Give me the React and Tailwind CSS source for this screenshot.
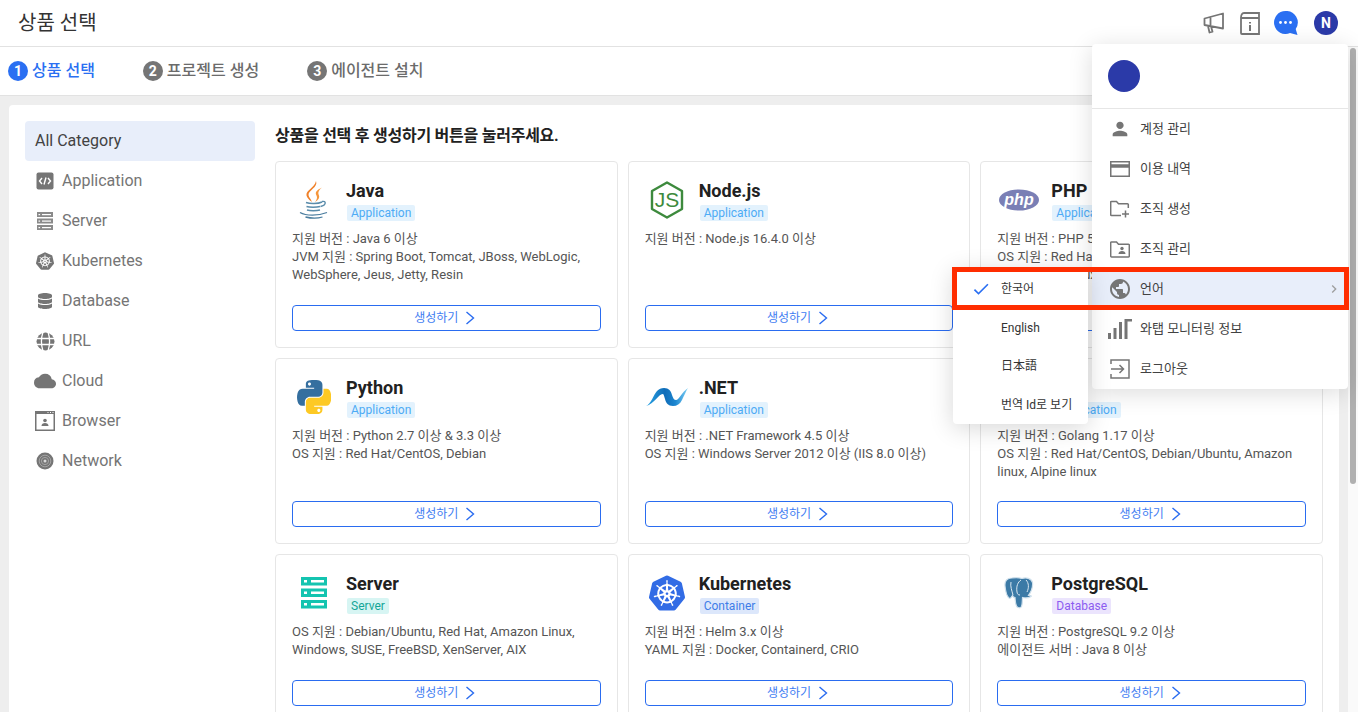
import { MdPerson, MdPublic, MdCheck, MdCloud, MdChevronRight } from 'react-icons/md';
import { SiKubernetes } from 'react-icons/si';
import { FaDatabase } from 'react-icons/fa';

const GRAY = '#757575';

// sidebar icons
function AppIcon() {
  return (
    <svg width="18" height="18" viewBox="0 0 18 18">
      <rect x="0.5" y="0.5" width="17" height="17" rx="2" fill={GRAY} />
      <path d="M6 6 3.5 9 6 12M12 6l2.5 3-2.5 3M10 5.5 8 12.5" fill="none" stroke="#fff" strokeWidth="1.4" />
    </svg>
  );
}

function ServerIcon() {
  return (
    <svg width="18" height="20" viewBox="0 0 18 20">
      {[1, 7.5, 14].map(y => (
        <g key={y}>
          <rect x="1" y={y} width="16" height="5" fill="#8a8a8a" />
          <rect x="2.5" y={y + 2} width="1.6" height="1.2" fill="#fff" />
          <rect x="6" y={y + 2} width="9" height="1.2" fill="#fff" />
        </g>
      ))}
    </svg>
  );
}

function GlobeIcon() {
  return (
    <svg width="19" height="19" viewBox="0 0 19 19">
      <circle cx="9.5" cy="9.5" r="9" fill={GRAY} />
      <path d="M0 6.5h19M0 12.5h19M7 0C5 6 5 13 7 19M12 0c2 6 2 13 0 19" fill="none" stroke="#fff" strokeWidth="1.3" />
    </svg>
  );
}

function BrowserIcon() {
  return (
    <svg width="20" height="20" viewBox="0 0 20 20">
      <rect x="0.75" y="0.75" width="18.5" height="18.5" fill="none" stroke={GRAY} strokeWidth="1.5" />
      <rect x="0" y="0" width="20" height="3" fill={GRAY} />
      <path d="M12.5 1.5h1M15 1.5h1M17.5 1.5h1" stroke="#fff" strokeWidth="1" />
      <circle cx="10" cy="9.5" r="1.8" fill={GRAY} />
      <path d="M6.5 15c0-2 1.5-3 3.5-3s3.5 1 3.5 3z" fill={GRAY} />
    </svg>
  );
}

function NetworkIcon() {
  return (
    <svg width="18" height="18" viewBox="0 0 18 18">
      <circle cx="9" cy="9" r="8.5" fill={GRAY} />
      <circle cx="9" cy="9" r="5.8" fill="none" stroke="#a8a8a8" strokeWidth="0.9" />
      <circle cx="9" cy="9" r="3.6" fill="none" stroke="#a8a8a8" strokeWidth="0.9" />
      <circle cx="9" cy="9" r="1.5" fill="#d8d8d8" />
    </svg>
  );
}

// product logos
function JavaLogo() {
  return (
    <svg width="30" height="38" viewBox="0 0 30 38">
      <path d="M17 0c2.500 6-8 9.500-7.500 14 .3 2.500 2.500 4 3.500 7-.5-.3-4.500-3-5.500-6.500C6.500 9.500 15.500 7 17 0z" fill="#f0812a" />
      <path d="M23 6.500c-5 2.500-7.500 4.500-5.500 8 1 2 .5 4-1.500 6.500 3.500-2 5-4.500 3.800-7-1-2.500-.3-4.500 3.200-7.500z" fill="#f5963c" />
      <path d="M7 21.500c4 1.500 12 1.500 16-.5M7.500 25.500c3 1 10 1 13.500 0M8 29c3 1 9.500 1 13 0M23 20.500c4.500-1 4.500 3.500-1.500 5" fill="none" stroke="#5a8cab" strokeWidth="1.400" />
      <path d="M1 31.500c6 3.500 18 3.500 27 0M6.500 36c6 1.500 12 1.500 17 0" fill="none" stroke="#4a7d9f" strokeWidth="1.300" />
    </svg>
  );
}

function NodeLogo() {
  return (
    <svg width="34" height="38" viewBox="0 0 34 38">
      <path d="M17 1.500 32 10v18L17 36.500 2 28V10z" fill="none" stroke="#3d8a3d" strokeWidth="2.400" strokeLinejoin="round" />
      <text x="17" y="26" textAnchor="middle" fontFamily="Liberation Sans" fontSize="21" fill="#3d8a3d">JS</text>
    </svg>
  );
}

function PhpLogo() {
  return (
    <svg width="40" height="22" viewBox="0 0 40 22">
      <ellipse cx="20" cy="11" rx="20" ry="10.500" fill="#7a7fb5" />
      <text x="20" y="15.500" textAnchor="middle" fontFamily="Liberation Sans" fontStyle="italic" fontWeight="700" fontSize="16" fill="#fff">php</text>
    </svg>
  );
}

function PythonLogo() {
  return (
    <svg width="34" height="34" viewBox="0 0 110 110">
      <path fill="#356f9f" d="M54.919 0C50.335.021 45.958.412 42.106 1.094 30.76 3.098 28.7 7.295 28.7 15.031V25.25h26.813v3.406H18.638c-7.793 0-14.616 4.684-16.75 13.594-2.462 10.213-2.571 16.586 0 27.25 1.906 7.938 6.457 13.594 14.25 13.594h9.219V70.844c0-8.85 7.657-16.656 16.75-16.656h26.781c7.455 0 13.406-6.138 13.406-13.625V15.031c0-7.266-6.13-12.725-13.406-13.937C64.282.328 59.502-.02 54.919 0ZM40.419 8.219c2.77 0 5.031 2.299 5.031 5.125 0 2.816-2.262 5.094-5.031 5.094-2.78 0-5.031-2.278-5.031-5.094 0-2.826 2.251-5.125 5.031-5.125Z" />
      <path fill="#fdc924" d="M85.638 28.656v11.906c0 9.231-7.826 17-16.75 17H42.106c-7.336 0-13.406 6.278-13.406 13.625v25.531c0 7.266 6.319 11.54 13.406 13.625 8.487 2.496 16.626 2.947 26.781 0 6.75-1.954 13.406-5.888 13.406-13.625V86.5H55.513v-3.406h40.188c7.793 0 10.696-5.436 13.406-13.594 2.8-8.399 2.68-16.476 0-27.25-1.926-7.757-5.604-13.594-13.406-13.594ZM70.575 93.313c2.78 0 5.031 2.278 5.031 5.094 0 2.826-2.251 5.125-5.031 5.125-2.77 0-5.031-2.299-5.031-5.125 0-2.816 2.261-5.094 5.031-5.094Z" />
    </svg>
  );
}

function DotnetLogo() {
  return (
    <svg width="42" height="18" viewBox="0 0 42 18">
      <defs>
        <linearGradient id="netg" x1="0" y1="0" x2="1" y2="0">
          <stop offset="0" stopColor="#2aa5e6" />
          <stop offset="0.45" stopColor="#0f6cb8" />
          <stop offset="0.7" stopColor="#1c86d0" />
          <stop offset="1" stopColor="#7fd0f5" />
        </linearGradient>
      </defs>
      <path d="M0 18C5 16 8 6 11 3 13 1 15 0 18 0c5 0 7 3 8 7 1 3 2 5 4 5 3 0 6-8 12-12-2 3-4 8-6 12-2 4-5 6-9 6-5 0-7-3-8-7-1-3-1-5-2.500-5C13 6 8 16 0 18z" fill="url(#netg)" />
    </svg>
  );
}

function ServerLogo() {
  return (
    <svg width="26" height="32" viewBox="0 0 26 32">
      {[0, 11.500, 23].map(y => (
        <g key={y}>
          <rect x="0" y={y} width="26" height="8.500" fill="#14c4b0" />
          <rect x="3" y={y + 3} width="3" height="2.500" fill="#fff" />
          <rect x="10" y={y + 3} width="13" height="2.500" fill="#fff" />
        </g>
      ))}
    </svg>
  );
}

function PostgresLogo() {
  return (
    <svg width="30" height="32" viewBox="0 0 30 32">
      <path d="M8 1C3 1 .5 4 1 9c.4 4 1.500 10 4 12 1.500 1 2.500-1 3.500-2.500.5 1.500 1 2 2.500 2 .2 3 .3 6 1.500 8.500 1 2 4 2.500 5 .5 1-2.500 .8-6 1-9 3 .8 6 .5 8.500-1 1-1-1-1-2.500-1.200C27 15 29 10 28.500 5.500 27.500 1.500 22 0 18 1.500 15 .5 11 .5 8 1z" fill="#3c7aa6" stroke="#cfe0ec" strokeWidth="1.200" />
      <path d="M7 5c-1 4 1 9 2 13M17 3c-3 2-5 6-4 12 .3 2 1 3 3 3 M22 3c3 3 3 8 1 12" fill="none" stroke="#dbe8f1" strokeWidth="1" />
    </svg>
  );
}

function GoLogo() {
  return (
    <svg width="40" height="20" viewBox="0 0 40 20">
      <text x="20" y="16" textAnchor="middle" fontFamily="Liberation Sans" fontStyle="italic" fontWeight="700" fontSize="19" fill="#00acd7">GO</text>
    </svg>
  );
}

const BADGES = {
  Application: 'bg-[#e3f2fd] text-[#4dabf5]',
  Server: 'bg-[#d7f5f3] text-[#14a597]',
  Container: 'bg-[#dce7fb] text-[#3f7de8]',
  Database: 'bg-[#ebe4fd] text-[#8c5cf0]',
};

const PRODUCTS = [
  { name: 'Java', badge: 'Application', logo: <JavaLogo />, lines: ['지원 버전 : Java 6 이상', 'JVM 지원 : Spring Boot, Tomcat, JBoss, WebLogic, WebSphere, Jeus, Jetty, Resin'] },
  { name: 'Node.js', badge: 'Application', logo: <NodeLogo />, lines: ['지원 버전 : Node.js 16.4.0 이상'] },
  { name: 'PHP', badge: 'Application', logo: <PhpLogo />, lines: ['지원 버전 : PHP 5.3 이상', 'OS 지원 : Red Hat/CentOS, Debian/Ubuntu, Amazon linux, Alpine linux'] },
  { name: 'Python', badge: 'Application', logo: <PythonLogo />, lines: ['지원 버전 : Python 2.7 이상 & 3.3 이상', 'OS 지원 : Red Hat/CentOS, Debian'] },
  { name: '.NET', badge: 'Application', logo: <DotnetLogo />, lines: ['지원 버전 : .NET Framework 4.5 이상', 'OS 지원 : Windows Server 2012 이상 (IIS 8.0 이상)'] },
  { name: 'Go', badge: 'Application', logo: <GoLogo />, lines: ['지원 버전 : Golang 1.17 이상', 'OS 지원 : Red Hat/CentOS, Debian/Ubuntu, Amazon linux, Alpine linux'] },
  { name: 'Server', badge: 'Server', logo: <ServerLogo />, lines: ['OS 지원 : Debian/Ubuntu, Red Hat, Amazon Linux, Windows, SUSE, FreeBSD, XenServer, AIX'] },
  { name: 'Kubernetes', badge: 'Container', logo: <SiKubernetes size={36} color="#326ce5" />, lines: ['지원 버전 : Helm 3.x 이상', 'YAML 지원 : Docker, Containerd, CRIO'] },
  { name: 'PostgreSQL', badge: 'Database', logo: <PostgresLogo />, lines: ['지원 버전 : PostgreSQL 9.2 이상', '에이전트 서버 : Java 8 이상'] },
];

const CATEGORIES = [
  { label: 'Application', icon: <AppIcon /> },
  { label: 'Server', icon: <ServerIcon /> },
  { label: 'Kubernetes', icon: <SiKubernetes size={18} color={GRAY} /> },
  { label: 'Database', icon: <FaDatabase size={16} color={GRAY} /> },
  { label: 'URL', icon: <GlobeIcon /> },
  { label: 'Cloud', icon: <MdCloud size={22} color={GRAY} /> },
  { label: 'Browser', icon: <BrowserIcon /> },
  { label: 'Network', icon: <NetworkIcon /> },
];

const STEPS = ['상품 선택', '프로젝트 생성', '에이전트 설치'];

function ProductCard({ item }) {
  return (
    <div className="flex flex-col rounded-[4px] border border-[#e6e6e6] bg-white p-4">
      <div className="mb-2 flex">
        <div className="mr-[10px] flex h-11 w-11 items-center justify-center">{item.logo}</div>
        <div className="flex flex-col items-start">
          <div className="h-[27px] text-[18px] leading-[26px] font-bold text-[#212121]">{item.name}</div>
          <span className={`ml-px h-4 rounded-[2px] px-[4px] text-[12px] leading-4 ${BADGES[item.badge]}`}>{item.badge}</span>
        </div>
      </div>
      <div className="pb-[20.5px] text-[13px] leading-[18px] text-[#555]">
        {item.lines.map(l => <div key={l}>{l}</div>)}
      </div>
      <button className="mt-auto flex h-[26px] shrink-0 items-center justify-center gap-[7px] rounded-[4px] border border-[#2a6cf0] bg-white pr-[2px] text-[12px] text-[#3f7df2]">
        생성하기
        <svg width="11" height="14" viewBox="0 0 11 14"><path d="M1.500 1 8.500 7l-7 6" fill="none" stroke="#2a6cf0" strokeWidth="1.400" /></svg>
      </button>
    </div>
  );
}

function FolderPlus() {
  return (
    <svg width="20" height="18" viewBox="0 0 20 18" fill="none" stroke={GRAY} strokeWidth="1.500">
      <path d="M11 15.500H1.500a.8.8 0 0 1-.8-.8V2.200a.8.8 0 0 1 .8-.8h5l2 2.300h9a.8.8 0 0 1 .8.8v3.500" />
      <path d="M15.500 10.500v7M12 14h7" />
    </svg>
  );
}

function FolderUser() {
  return (
    <svg width="20" height="17" viewBox="0 0 20 17">
      <path d="M1.500 1h5l2 2.300h10a.8.8 0 0 1 .8.8v11a.8.8 0 0 1-.8.8h-17a.8.8 0 0 1-.8-.8V1.800a.8.8 0 0 1 .8-.8z" fill="none" stroke={GRAY} strokeWidth="1.500" />
      <circle cx="12" cy="7.500" r="1.700" fill={GRAY} />
      <path d="M8.500 13c0-2 1.500-3 3.500-3s3.500 1 3.500 3z" fill={GRAY} />
    </svg>
  );
}

const MENU = [
  { label: '계정 관리', icon: <MdPerson size={22} color={GRAY} /> },
  { label: '이용 내역', icon: <svg width="20" height="16" viewBox="0 0 20 16" fill="none" stroke={GRAY} strokeWidth="1.500"><rect x="0.750" y="0.750" width="18.500" height="14.500" /><path d="M0 5h20" strokeWidth="3.500" /></svg> },
  { label: '조직 생성', icon: <FolderPlus /> },
  { label: '조직 관리', icon: <FolderUser /> },
  { label: '언어', icon: <MdPublic size={24} color={GRAY} />, active: true },
  { label: '와탭 모니터링 정보', icon: <svg width="24" height="20" viewBox="0 0 24 20" fill={GRAY}><rect x="0" y="14" width="3" height="6" /><rect x="5.500" y="9" width="3" height="11" /><rect x="11" y="3" width="3" height="17" /><path d="M16.500 20V0H24v2.500h-4.500V20z" /></svg> },
  { label: '로그아웃', icon: <svg width="20" height="20" viewBox="0 0 20 20" fill="none" stroke={GRAY} strokeWidth="1.500"><path d="M1 5V1h18v18H1v-4" /><path d="M1 10h12M9.500 6l4 4-4 4" /></svg> },
];

const LANGS = [
  { label: '한국어', checked: true },
  { label: 'English' },
  { label: '日本語' },
  { label: '번역 Id로 보기' },
];

export default function App() {
  return (
    <div className="relative flex h-[712px] w-[1358px] flex-col overflow-hidden bg-white font-['Roboto','Noto_Sans_CJK_KR',sans-serif]">
      {/* Top bar */}
      <header className="flex h-[47px] shrink-0 items-center border-b border-[#e2e2e2] bg-white pr-5 pl-[18px]">
        <h1 className="flex-1 text-[20px] font-normal text-[#333]">상품 선택</h1>
        <div className="flex items-center">
          <svg width="22" height="22" viewBox="0 0 22 22" fill="none" stroke={GRAY} strokeWidth="1.800" className="mr-[15px]">
            <path d="M1.500 6.500 20 1.500v15L1.500 13zM7.500 5v10M5 14l1.500 6.500 3-.8L8.200 15" strokeLinejoin="round" />
          </svg>
          <svg width="20" height="23" viewBox="0 0 20 23" fill="none" stroke={GRAY} strokeWidth="1.800" className="mr-[14px]">
            <path d="M1 6V21a1 1 0 0 0 1 1h17V6H1zM1 6c0-3 1-5 3-5h15v5" />
            <path d="M10 10v1.500M10 13v6" strokeWidth="2" />
          </svg>
          <svg width="24" height="24" viewBox="0 0 24 24" className="mr-[16px]">
            <path d="M11.500 0a11.500 11.500 0 1 0 4.500 22.100L23.500 24l-1.800-6A11.500 11.500 0 0 0 11.500 0z" fill="#2a6ff2" />
            <circle cx="6.500" cy="11.500" r="1.400" fill="#fff" />
            <circle cx="11.500" cy="11.500" r="1.400" fill="#fff" />
            <circle cx="16.500" cy="11.500" r="1.400" fill="#fff" />
          </svg>
          <div className="flex h-6 w-6 items-center justify-center rounded-full bg-[#2b3aa8] text-[14px] font-bold text-white">N</div>
        </div>
      </header>

      <div className="flex min-h-0 flex-1">
        <div className="min-w-0 flex-1 overflow-hidden bg-[#eeeeee]">
          {/* Steps */}
          <div className="flex h-[49px] items-center gap-12 border-b border-[#e2e2e2] bg-white pl-2">
            {STEPS.map((s, i) => (
              <div key={s} className={`flex items-center gap-[4px] ${i === 0 ? 'text-[#2a6ff2]' : 'text-[#6b6b6b]'}`}>
                <span className={`flex h-5 w-5 items-center justify-center rounded-full text-[14px] font-bold text-white ${i === 0 ? 'bg-[#2a6ff2]' : 'bg-[#757575]'}`}>{i + 1}</span>
                <span className="text-[16px] font-medium">{s}</span>
              </div>
            ))}
          </div>

          <div className="px-[9px] pt-[9px]">
            <div className="flex gap-5 rounded-[4px] bg-white p-4">
              {/* Category list */}
              <aside className="w-[230px] shrink-0">
                <div className="flex h-10 items-center rounded-[4px] bg-[#e8eefa] pl-[10px] text-[16px] text-[#424242]">All Category</div>
                {CATEGORIES.map(c => (
                  <div key={c.label} className="flex h-10 items-center text-[16px] text-[#757575]">
                    <div className="flex w-[37px] justify-center pl-[3px]">{c.icon}</div>
                    {c.label}
                  </div>
                ))}
              </aside>

              <main className="min-w-0 flex-1">
                <h2 className="mb-[14px] h-[26px] text-[16px] leading-[30px] font-bold tracking-[-0.25px] text-[#212121]">상품을 선택 후 생성하기 버튼을 눌러주세요.</h2>
                <div className="grid grid-cols-3 gap-[10px]">
                  {PRODUCTS.map(p => <ProductCard key={p.name} item={p} />)}
                </div>
              </main>
            </div>
          </div>
        </div>

        {/* Scrollbar */}
        <div className="w-[10px] shrink-0 bg-[#fafafa] pt-px pl-[2px]">
          <div className="h-[436px] w-[6px] rounded-[3px] bg-[#b0b0b0]" />
        </div>
      </div>

      {/* User menu */}
      <div className="absolute top-[44px] left-[1092px] w-[256px] rounded-[4px] bg-white shadow-[0_4px_24px_rgba(0,0,0,0.14)]">
        <div className="h-[65px] border-b border-[#e6e6e6] pt-4 pl-4">
          <div className="h-8 w-8 rounded-full bg-[#2b3aa8]" />
        </div>
        {MENU.map(m => (
          <div key={m.label} className={`flex h-10 items-center text-[13px] text-[#424242] ${m.active ? 'bg-[#e8eefa]' : ''}`}>
            <div className="ml-4 flex w-6 justify-center">{m.icon}</div>
            <span className="ml-2 flex-1">{m.label}</span>
            {m.active && <MdChevronRight size={16} color="#9e9e9e" className="mr-[6px]" />}
          </div>
        ))}
      </div>

      {/* Language submenu */}
      <div className="absolute top-[268px] left-[953px] w-[135px] rounded-[4px] bg-white pt-[2px] shadow-[0_4px_24px_rgba(0,0,0,0.16)]">
        {LANGS.map(l => (
          <div key={l.label} className="flex h-[38.5px] items-center text-[12px] text-[#333]">
            <div className="ml-[18px] flex w-[20px] justify-center">
              {l.checked && <MdCheck size={20} color="#2a6ff2" />}
            </div>
            <span className="ml-[10px]">{l.label}</span>
          </div>
        ))}
      </div>

      {/* Red annotation box */}
      <div className="pointer-events-none absolute top-[267px] left-[952px] h-[43px] w-[397px] border-[5px] border-[#ff2d00]" />
    </div>
  );
}
